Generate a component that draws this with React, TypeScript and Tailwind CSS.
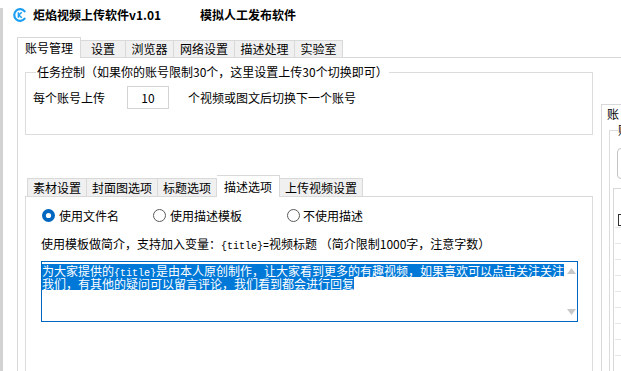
import clsx from 'clsx';

const outerTabs = [
  { label: '账号管理', w: 'w-[64px]', active: true },
  { label: '设置', w: 'w-[45px]', active: false },
  { label: '浏览器', w: 'w-[48px]', active: false },
  { label: '网络设置', w: 'w-[61px]', active: false },
  { label: '描述处理', w: 'w-[60px]', active: false },
  { label: '实验室', w: 'w-[48px]', active: false },
];

const innerTabs = [
  { label: '素材设置', w: 'w-[60px]', active: false },
  { label: '封面图选项', w: 'w-[71px]', active: false },
  { label: '标题选项', w: 'w-[59px]', active: false },
  { label: '描述选项', w: 'w-[63px]', active: true },
  { label: '上传视频设置', w: 'w-[83px]', active: false },
];

const Logo = () => (
  <svg width="14" height="14" viewBox="0 0 14 14">
    <path
      d="M11.6 3.4 A5.8 5.8 0 1 0 11.6 10.6"
      fill="none"
      stroke="#1a9ef2"
      strokeWidth="2.2"
      strokeLinecap="round"
    />
    <path d="M5.4 4.2 V9.8 M8.8 4.2 L5.8 7 L8.8 9.8" fill="none" stroke="#1a9ef2" strokeWidth="1.5" />
  </svg>
);

const Radio = ({ checked }: { checked?: boolean }) => (
  <svg width="13" height="13" viewBox="0 0 13 13" className="shrink-0">
    {checked ? (
      <>
        <circle cx="6.5" cy="6.5" r="6.5" fill="#0067c0" />
        <circle cx="6.5" cy="6.5" r="2.6" fill="#ffffff" />
      </>
    ) : (
      <circle cx="6.5" cy="6.5" r="6" fill="#ffffff" stroke="#5a5a5a" strokeWidth="1" />
    )}
  </svg>
);

const Arrow = ({ down }: { down?: boolean }) => (
  <svg width="9" height="6" viewBox="0 0 9 6">
    <polygon points={down ? '0,0 9,0 4.5,6' : '0,6 9,6 4.5,0'} fill="#c8c8c8" />
  </svg>
);

// half-width text in the original is 6px wide per char
const Mono = ({ children }: { children: string }) => (
  <span className="font-['Liberation_Mono',monospace] text-[10px]">{children}</span>
);

export default function App() {
  return (
    <div className="relative flex h-[371px] w-[621px] overflow-hidden bg-white font-['Noto_Sans_CJK_SC',sans-serif] text-[12px] text-black">
      <div className="mt-[8px] w-[3px] shrink-0 bg-[#d2d2d2]" />

      <div className="flex min-w-0 flex-1 flex-col">
        {/* title bar */}
        <div className="flex h-[37px] shrink-0 items-start pl-[10px] pt-[8px]">
          <Logo />
          <span className="ml-[6px] w-[167px] font-bold leading-[14px]">炬焰视频上传软件v1.01</span>
          <span className="font-bold leading-[14px]">模拟人工发布软件</span>
        </div>

        {/* outer tabs */}
        <div className="ml-[14px] flex h-[21px] shrink-0 items-end border-b border-[#d9d9d9]">
          {outerTabs.map((t) => (
            <div
              key={t.label}
              className={clsx(
                'flex shrink-0 items-center justify-center border-r border-t border-[#d9d9d9] leading-none',
                t.w,
                t.active ? '-mb-px h-[21px] border-l bg-white' : 'h-[17px] bg-[#f0f0f0]'
              )}
            >
              {t.label}
            </div>
          ))}
        </div>

        {/* outer tab page */}
        <div className="ml-[14px] flex flex-1 border-l border-[#d9d9d9] pl-[7px]">
          <div className="flex w-[568px] shrink-0 flex-col">
            <fieldset className="mt-[7px] h-[70px] border border-[#dcdcdc]">
              <legend className="ml-[10px] px-[1px] leading-[14px]">
                任务控制（如果你的账号限制30个，这里设置上传30个切换即可）
              </legend>
              <div className="mt-[7px] flex items-center pl-[7px]">
                <span className="w-[94px] leading-[14px]">每个账号上传</span>
                <div className="flex h-[23px] w-[42px] items-center justify-center border border-[#d4d4d4] leading-none">
                  10
                </div>
                <span className="ml-[19px] leading-[14px]">个视频或图文后切换下一个账号</span>
              </div>
            </fieldset>

            {/* inner tab control */}
            <div className="mt-[40px] flex h-[22px] shrink-0 items-end border-b border-[#d9d9d9] pl-[2px]">
              {innerTabs.map((t) => (
                <div
                  key={t.label}
                  className={clsx(
                    'flex shrink-0 items-center justify-center border-r border-t border-[#d9d9d9] leading-none',
                    t.w,
                    t.active ? '-mb-px h-[22px] bg-white' : 'h-[18px] bg-[#f0f0f0]',
                    t.label === '素材设置' && 'border-l'
                  )}
                >
                  {t.label}
                </div>
              ))}
            </div>
            <div className="flex flex-1 flex-col border-x border-[#dcdcdc]">
              <div className="mt-[12px] flex h-[13px] items-center pl-[16px]">
                <div className="flex w-[111px] items-center gap-[4px]">
                  <Radio checked />
                  <span className="leading-[14px]">使用文件名</span>
                </div>
                <div className="flex w-[134px] items-center gap-[4px]">
                  <Radio />
                  <span className="leading-[14px]">使用描述模板</span>
                </div>
                <div className="flex items-center gap-[3px]">
                  <Radio />
                  <span className="leading-[14px]">不使用描述</span>
                </div>
              </div>

              <div className="pl-[15px]">
                <div className="mt-[15px] whitespace-nowrap leading-[14px]">
                  使用模板做简介，支持加入变量：<Mono>{'{title}='}</Mono>视频标题 （简介限制1000字，注意字数）
                </div>
                <div className="mt-[7px] flex h-[61px] w-[537px] border border-[#0067c0]">
                  <div className="min-w-0 flex-1 whitespace-nowrap">
                    <div className="h-[13px]">
                      <span className="inline-block h-[13px] bg-[#0078d7] leading-[13px] text-white">
                        为大家提供的<Mono>{'{title}'}</Mono>是由本人原创制作，让大家看到更多的有趣视频，如果喜欢可以点击关注关注
                      </span>
                    </div>
                    <div className="h-[13px]">
                      <span className="inline-block h-[13px] bg-[#0078d7] leading-[13px] text-white">
                        我们，有其他的疑问可以留言评论，我们看到都会进行回复
                      </span>
                    </div>
                  </div>
                  <div className="flex w-[11px] shrink-0 flex-col items-center justify-between pb-[6px] pt-[6px]">
                    <Arrow />
                    <Arrow down />
                  </div>
                </div>
              </div>
            </div>
          </div>

          {/* right panel */}
          <div className="ml-[8px] mt-[46px] flex w-[160px] shrink-0 flex-col border-l border-t border-[#d9d9d9]">
            <div className="whitespace-nowrap pl-[5px] pt-[2px] leading-[14px]">账</div>
            <fieldset className="ml-[7px] mt-[2px] h-[260px] w-[150px] border border-[#dcdcdc]">
              <legend className="ml-[8px] whitespace-nowrap leading-[14px]">账号列表</legend>
              <div className="ml-[7px] mt-[11px] h-[31px] w-[150px] rounded-[4px] border border-[#c4c4c4]" />
              <div className="ml-[3px] mt-[9px] h-[200px] border-l border-t border-[#d9d9d9]">
                <div className="ml-[4px] mt-[25px] h-[12px] w-[12px] border border-[#333333]" />
                <div className="mt-[1px]">
                  {Array.from({ length: 9 }).map((_, i) => (
                    <div key={i} className="ml-[1px] h-[16px] border-t border-[#e6e6e6]" />
                  ))}
                </div>
              </div>
            </fieldset>
          </div>
        </div>
      </div>
    </div>
  );
}
